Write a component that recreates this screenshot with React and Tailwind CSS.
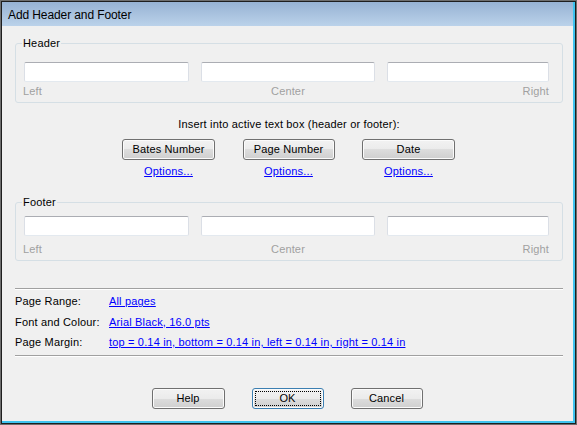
import React from "react";

const btnBase =
  "flex items-center justify-center h-[21px] rounded-[3px] border text-[11px] leading-none tracking-[0.15px] text-black bg-[linear-gradient(to_bottom,#f2f2f2_0%,#ebebeb_50%,#dddddd_50%,#cfcfcf_100%)] shadow-[inset_0_0_0_1px_#fbfbfb]";

function Field() {
  return (
    <div className="h-[20px] bg-white rounded-[2px] border border-t-[#abadb3] border-l-[#dbdfe6] border-r-[#dbdfe6] border-b-[#e3e9ef]" />
  );
}

function Labels({ mt }) {
  return (
    <div className={"grid grid-cols-[165px_174px_162px] gap-x-[12px] text-[11px] leading-[14px] tracking-[0.15px] text-[#a0a0a0] " + mt}>
      <span className="justify-self-start -ml-[1px]">Left</span>
      <span className="justify-self-center">Center</span>
      <span className="justify-self-end">Right</span>
    </div>
  );
}

function Fields() {
  return (
    <div className="grid grid-cols-[165px_174px_162px] gap-x-[12px]">
      <Field />
      <Field />
      <Field />
    </div>
  );
}

export default function App() {
  return (
    <div className="w-[577px] h-[425px] border border-[#6e6e6e] font-['Liberation_Sans',Arial,sans-serif] text-black">
      <div className="h-full border border-[#1e1e1e]">
        <div className="h-full flex flex-col border-r-2 border-b-2 border-[#3ec3ef] bg-[#f0f0f0]">
          {/* Title bar */}
          <div className="h-[24px] shrink-0 flex items-center pl-[6px] pt-[1px] bg-[linear-gradient(to_bottom,#97b2d3,#bbd2ea)] text-[12px] tracking-[-0.1px] text-black">
            Add Header and Footer
          </div>

          {/* Body */}
          <div className="flex flex-col pl-[13px] pr-[10px] pt-[10px] tracking-[0.17px]">
            {/* Header group */}
            <fieldset className="border border-[#d5dfe5] rounded-[3px] pl-[8px] pr-[13px] pt-[12px] pb-[4px]">
              <legend className="-ml-[2px] px-[1px] text-[11px] leading-[14px]">Header</legend>
              <Fields />
              <Labels mt="mt-[2px]" />
            </fieldset>

            {/* Insert section */}
            <div className="mt-[14px] text-center text-[11px] leading-[14px]">
              Insert into active text box (header or footer):
            </div>
            <div className="mt-[8px] grid grid-cols-[120px_120px_120px] justify-center pr-[1px]">
              <div className="flex flex-col items-center">
                <button className={btnBase + " w-[93px] border-[#707070]"}>Bates Number</button>
                <a className="mt-[4px] text-[11px] leading-[14px] text-[#0000ff] underline cursor-pointer">Options...</a>
              </div>
              <div className="flex flex-col items-center">
                <button className={btnBase + " w-[92px] border-[#707070]"}>Page Number</button>
                <a className="mt-[4px] text-[11px] leading-[14px] text-[#0000ff] underline cursor-pointer">Options...</a>
              </div>
              <div className="flex flex-col items-center">
                <button className={btnBase + " w-[93px] border-[#707070]"}>Date</button>
                <a className="mt-[4px] text-[11px] leading-[14px] text-[#0000ff] underline cursor-pointer">Options...</a>
              </div>
            </div>

            {/* Footer group */}
            <fieldset className="mt-[17px] border border-[#d5dfe5] rounded-[3px] pl-[8px] pr-[13px] pt-[7px] pb-[4px]">
              <legend className="-ml-[2px] px-[1px] text-[11px] leading-[14px]">Footer</legend>
              <Fields />
              <Labels mt="mt-[6px]" />
            </fieldset>

            {/* Separator */}
            <div className="mt-[27px] h-[2px] border-t border-b border-t-[#a0a0a0] border-b-white" />

            {/* Settings rows */}
            <div className="mt-[1px] flex flex-col text-[11px]">
              <div className="h-[21px] flex items-center">
                <span className="w-[94px]">Page Range:</span>
                <a className="text-[#0000ff] underline cursor-pointer">All pages</a>
              </div>
              <div className="h-[20px] flex items-center">
                <span className="w-[94px]">Font and Colour:</span>
                <a className="text-[#0000ff] underline cursor-pointer">Arial Black, 16.0 pts</a>
              </div>
              <div className="h-[20px] flex items-center">
                <span className="w-[94px]">Page Margin:</span>
                <a className="text-[#0000ff] underline cursor-pointer">
                  top = 0.14 in, bottom = 0.14 in, left = 0.14 in, right = 0.14 in
                </a>
              </div>
            </div>

            {/* Separator */}
            <div className="mt-[3px] h-[2px] border-t border-b border-t-[#a0a0a0] border-b-white" />

            {/* Bottom buttons */}
            <div className="mt-[31px] flex justify-center gap-[27px] pr-[4px]">
              <button className={btnBase + " w-[73px] border-[#707070]"}>Help</button>
              <button className={btnBase + " w-[72px] border-[#3c7fb1] shadow-[inset_0_0_0_1px_#4fd2f6] outline-1 outline-dotted outline-black outline-offset-[-4px]"}>OK</button>
              <button className={btnBase + " w-[72px] border-[#707070]"}>Cancel</button>
            </div>
          </div>
        </div>
      </div>
    </div>
  );
}
